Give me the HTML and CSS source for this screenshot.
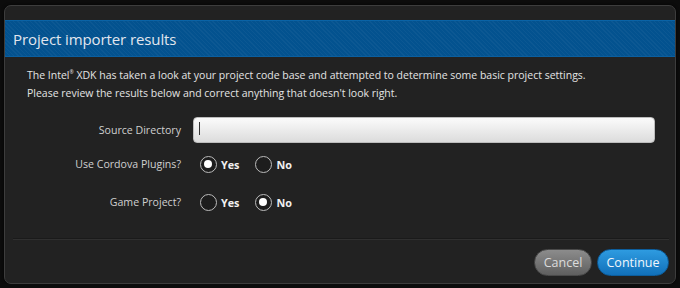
FILE: index.html
```html
<!DOCTYPE html>
<html>
<head>
<meta charset="utf-8">
<link rel="stylesheet" href="styles.css">
</head>
<body>
<div class="dialog">
  <div class="header"><span class="title">Project importer results</span></div>
  <div class="content">
    <p class="intro">The Intel<sup>®</sup> XDK has taken a look at your project code base and attempted to determine some basic project settings.<br>Please review the results below and correct anything that doesn't look right.</p>
    <div class="form">
      <div class="row row-input">
        <label class="label">Source Directory</label>
        <div class="input"><span class="caret"></span></div>
      </div>
      <div class="row row-cordova">
        <span class="label">Use Cordova Plugins?</span>
        <div class="choices">
          <span class="choice"><span class="radio checked"></span><span class="opt">Yes</span></span>
          <span class="choice"><span class="radio"></span><span class="opt">No</span></span>
        </div>
      </div>
      <div class="row row-game">
        <span class="label">Game Project?</span>
        <div class="choices">
          <span class="choice"><span class="radio"></span><span class="opt">Yes</span></span>
          <span class="choice"><span class="radio checked"></span><span class="opt">No</span></span>
        </div>
      </div>
    </div>
  </div>
  <div class="footer">
    <button class="btn btn-cancel">Cancel</button>
    <button class="btn btn-continue">Continue</button>
  </div>
</div>
</body>
</html>
```
FILE: styles.css
```css
html, body {
  margin: 0;
  padding: 0;
  background: #0c0c0c;
}
body {
  padding: 5px 4px 0 4px;
  font-family: "Open Sans", "DejaVu Sans", sans-serif;
  color: #dedede;
}
.dialog {
  box-sizing: border-box;
  width: 672px;
  height: 279px;
  background: #222222;
  border: 1px solid #3d3d3d;
  border-radius: 7px;
  padding-top: 14px;
  display: flex;
  flex-direction: column;
  box-shadow: 0 0 3px rgba(0,0,0,0.8);
}
.header {
  height: 37px;
  box-sizing: border-box;
  background-color: #03528f;
  background-image: repeating-linear-gradient(45deg, rgba(255,255,255,0.035) 0 1px, rgba(0,0,0,0) 1px 3px);
  border-top: 1px solid #0a63a6;
  border-bottom: 1px solid #0a5fa0;
  display: flex;
  align-items: center;
  padding-left: 8px;
}
.title {
  font-size: 15px;
  color: #e2e6ee;
  letter-spacing: -0.1px;
}
.content {
  padding: 9px 20px 0 22px;
  flex: 1;
}
.intro {
  margin: 0;
  font-size: 10.5px;
  line-height: 18px;
  color: #e4e4e4;
}
.intro sup {
  font-size: 5px;
  vertical-align: 5px;
  line-height: 0;
}
.form {
  margin-top: 15px;
  display: flex;
  flex-direction: column;
}
.row {
  display: grid;
  grid-template-columns: 154px 1fr;
  column-gap: 12px;
  align-items: center;
  height: 26px;
}
.row-cordova { margin-top: 8px; }
.row-game { margin-top: 12px; }
.label {
  text-align: right;
  font-size: 10.6px;
  color: #d0d0d0;
}
.input {
  height: 26px;
  box-sizing: border-box;
  border-radius: 4px;
  background: linear-gradient(#fbfbfb, #dcdcdc);
  border: 1px solid #bdbdbd;
  position: relative;
}
.caret {
  position: absolute;
  left: 5px;
  top: 4px;
  width: 1px;
  height: 13px;
  background: #333;
}
.choices {
  display: flex;
  align-items: center;
  padding-left: 7px;
  gap: 16px;
}
.choice {
  display: flex;
  align-items: center;
  gap: 4px;
}
.radio {
  box-sizing: border-box;
  width: 17px;
  height: 17px;
  border-radius: 50%;
  border: 1.5px solid #bcbcbc;
  background: #1d1d1d;
  position: relative;
}
.radio.checked::after {
  content: "";
  position: absolute;
  left: 3px;
  top: 3px;
  width: 8px;
  height: 8px;
  border-radius: 50%;
  background: #fff;
}
.opt {
  font-size: 10.8px;
  font-weight: 700;
  color: #f0f0f0;
}
.footer {
  margin: 0 6px 0 8px;
  height: 44px;
  border-top: 1px solid #303030;
  box-shadow: 0 -1px 0 #1a1a1a;
  display: flex;
  justify-content: flex-end;
  align-items: flex-start;
  padding-top: 9px;
  gap: 5px;
  box-sizing: border-box;
}
.btn {
  height: 27px;
  border-radius: 14px;
  font-family: "Open Sans", "DejaVu Sans", sans-serif;
  font-size: 12.5px;
  padding: 0;
  cursor: pointer;
}
.btn-cancel {
  width: 58px;
  color: #dcdcdc;
  background: linear-gradient(#8c8c8c, #5f5f5f);
  border: 1px solid #4a4a4a;
}
.btn-continue {
  width: 72px;
  color: #f2f7fc;
  background: linear-gradient(#2e9be0, #1170ba);
  border: 1px solid #0c5d9c;
}
```
